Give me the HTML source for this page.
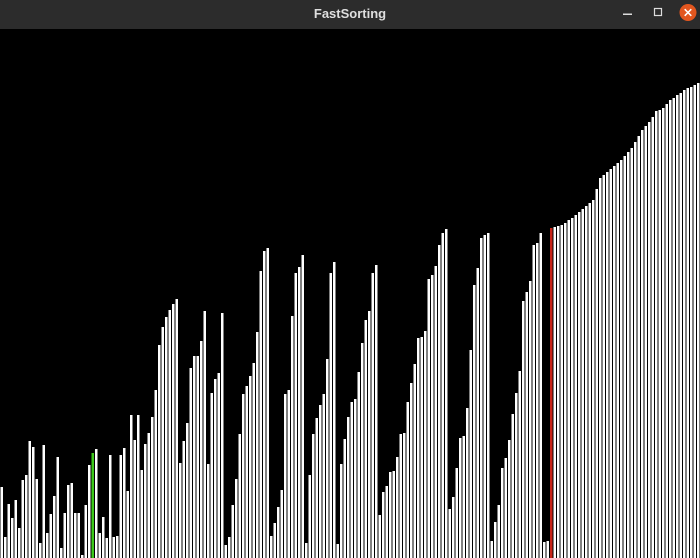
<!DOCTYPE html>
<html><head><meta charset="utf-8"><style>
html,body{margin:0;padding:0;width:700px;height:558px;overflow:hidden;background:#000;}
#tb{position:absolute;left:0;top:0;width:700px;height:29px;background:#2c2c2c;}
#title{position:absolute;left:0;width:700px;top:6px;text-align:center;color:#dfdfdf;font:bold 13px "Liberation Sans",sans-serif;}
svg{position:absolute;left:0;top:0;}
</style></head><body>
<div id="tb"><div id="title">FastSorting</div></div>
<svg id="s" width="700" height="558" viewBox="0 0 700 558">
<rect x="623" y="13.5" width="9" height="1.5" fill="#ddd"/>
<rect x="654.5" y="8.5" width="7" height="7" fill="none" stroke="#ddd" stroke-width="1.2"/>
<circle cx="688" cy="12.5" r="8.5" fill="#e2561f"/>
<path d="M684.7 9.2L691.3 15.8M691.3 9.2L684.7 15.8" stroke="#fff" stroke-width="1.5"/>
<g id="bars"></g>
</svg>
<script>
var t=[487,537,504,518,500,528,480,475,441,447,479,543,445,533,514,496,457,548,513,485,483,513,513,555,505,465,453,449,533,517,538,455,537,536,455,448,491,415,440,415,
470,444,433,417,390,345,327,317,310,304,299,463,441,423,368,356,356,341,311,464,393,379,373,313,545,537,505,479,434,394,386,376,363,332,271,251,248,536,523,507,
490,394,390,316,273,267,255,543,475,434,418,405,394,359,273,262,544,464,439,417,402,399,372,343,320,311,273,265,515,492,486,472,471,457,434,433,402,383,364,338,
337,331,279,275,266,245,233,229,509,497,468,438,436,408,350,285,268,238,235,233,541,522,505,468,458,440,414,393,371,301,292,281,245,243,233,542,541,228,227,226];
var a=[[160,225],[164,215],[169,200],[171,178],[177,160],[180,148],[183,130],[185,122],[187,111],[189,108],[190,104],[191,100],[193,95],[196,88],[198,85],[199,83]];
for(var i=160;i<200;i++){for(var k=0;k<a.length-1;k++){if(i>=a[k][0]&&i<=a[k+1][0]){var f=(i-a[k][0])/(a[k+1][0]-a[k][0]);t[i]=Math.round(a[k][1]+f*(a[k+1][1]-a[k][1]));break;}}}
var g=document.getElementById('bars'),h='';
for(var i=0;i<200;i++){var c=i==26?'#3cc81a':(i==157?'#c8261a':'#fff');
h+='<rect x="'+(i*3.5+0.5)+'" y="'+t[i]+'" width="2.5" height="'+(558-t[i])+'" fill="'+c+'"/>';}
g.innerHTML=h;
</script>
</body></html>
